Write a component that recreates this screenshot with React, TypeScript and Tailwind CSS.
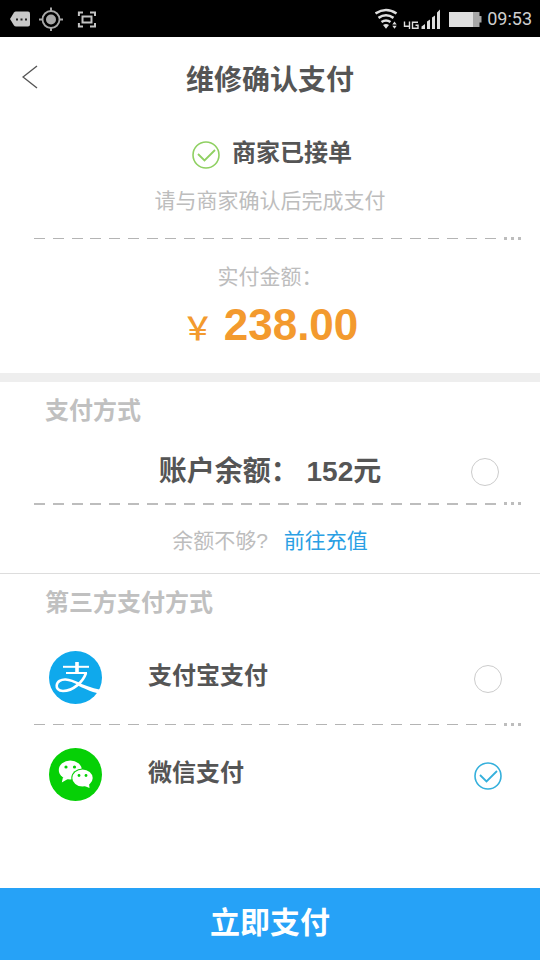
import { useState, type FormEvent, type ReactNode } from "react";

type Method = "balance" | "alipay" | "wechat";

const DASHES = Array.from({ length: 25 }, (_, i) => i);

function StatusBar() {
  return (
    <div className="flex h-[37px] items-center bg-black pr-2 pl-2.5 text-[#cfcfcf]">
      <svg className="h-6 w-24" viewBox="0 0 96 24" fill="none" aria-hidden="true">
        <path d="M0 12 4 5.500q.7-1 2-1h12q2 0 2 2v11q0 2-2 2H6q-1.300 0-2-1z" fill="#c8c8c8" />
        <path d="M6 11.500h2v2H6zM10.500 11.500h2v2h-2zM15 11.500h2v2h-2z" fill="#222" />
        <circle cx="41" cy="12.500" r="8.500" stroke="#a8a8a8" strokeWidth="1.800" />
        <circle cx="41" cy="12.500" r="5" fill="#a8a8a8" />
        <path d="M41 .5v4M41 20.500v4M29 12.500h4M49 12.500h4" stroke="#a8a8a8" strokeWidth="2" />
        <path d="M68.900 9V5.500H73M80 5.500h5V9M85 16v3.500h-5M73 19.500h-4.100V16" stroke="#c4c4c4" strokeWidth="2" />
        <rect x="72.500" y="9.500" width="9" height="6" stroke="#c4c4c4" strokeWidth="2" />
      </svg>
      <div className="ml-auto flex items-center">
        <svg className="h-6 w-[112px]" viewBox="0 0 112 24" fill="none" aria-hidden="true">
          <g stroke="#dedede" strokeWidth="2.600">
            <path d="M.5 6.500q10.500-7 21 0" />
            <path d="M3.500 10.800q7.500-5 15 0" />
            <path d="M6.500 15q4.500-3 9 0" />
          </g>
          <path d="M8 18q3-2 6 0l-3 3.800z" fill="#dedede" />
          <path d="m17.300 17.500 2.200-3 2.200 3zM17.300 18.800h4.400l-2.200 3z" fill="#dedede" />
          <path d="M29.500 14.500v4.700h5.500M34.500 14.500V22M43 15.200h-5.500v6H43v-3h-2.500" stroke="#dedede" strokeWidth="1.400" />
          <path d="M46.500 19.500 50 17v5h-3.500zM52 14.500l3-2V22h-3zM57 10.500l3-2V22h-3zM62 5.500l3-3V22h-3z" fill="#dedede" />
          <path d="M74 5h26v15H74z" fill="#dedede" />
          <path d="M98 5h6.500v4h2v6.500h-2V20H98z" fill="#a6a6a6" />
        </svg>
        <span className="font-['Roboto',sans-serif] text-[18px] leading-6">09:53</span>
      </div>
    </div>
  );
}

function CheckCircle({ className }: { className: string }) {
  return (
    <svg className={className} viewBox="0 0 28 28" fill="none" stroke="currentColor" aria-hidden="true">
      <circle cx="14" cy="14" r="13" strokeWidth="1.600" />
      <path d="m6 13 6.500 6.500L23 9" strokeWidth="1.800" />
    </svg>
  );
}

function DashedDivider({ thick = false }: { thick?: boolean }) {
  return (
    <div className="flex h-[3px] items-center gap-2 pr-[19px] pl-[34px]" role="separator">
      <div className="flex flex-1 justify-between">
        {DASHES.map((i) => (
          <span key={i} className={thick ? "h-[2px] w-[11px] bg-[#bdbdbd]" : "h-px w-[11px] bg-[#b4b4b4]"} />
        ))}
      </div>
      <div className="flex gap-1">
        <span className="size-[3px] bg-[#bdbdbd]" />
        <span className="size-[3px] bg-[#bdbdbd]" />
        <span className="size-[3px] bg-[#bdbdbd]" />
      </div>
    </div>
  );
}

type RadioProps = {
  id: Method;
  selected: Method;
  onSelect: (m: Method) => void;
};

function MethodRadio({ id, selected, onSelect }: RadioProps) {
  return (
    <span className="relative block size-7">
      <input
        id={id}
        type="radio"
        name="method"
        value={id}
        checked={selected === id}
        onChange={() => onSelect(id)}
        className="block size-7 cursor-pointer appearance-none rounded-full border border-[#cccccc] checked:border-transparent"
      />
      {selected === id && (
        <CheckCircle className="pointer-events-none absolute inset-0 size-7 text-[#35b0dc]" />
      )}
    </span>
  );
}

function MethodRow({ icon, label, ...radio }: RadioProps & { icon: ReactNode; label: string }) {
  return (
    <div className="flex items-center pr-[38px] pl-[49px]">
      {icon}
      <label htmlFor={radio.id} className="ml-[46px] flex-1 pb-1 text-[24px] leading-8 font-bold">
        {label}
      </label>
      <div className="pt-[3px]">
        <MethodRadio {...radio} />
      </div>
    </div>
  );
}

function AlipayLogo() {
  return (
    <svg className="size-[53px]" viewBox="0 0 53 53" fill="none" aria-hidden="true">
      <circle cx="26.500" cy="26.500" r="26.500" fill="#0fa9ec" />
      <g stroke="#fff">
        <path d="M28 11v11" strokeWidth="3.600" />
        <path d="M14 15.800h26" strokeWidth="2" />
        <path d="M17 22h21" strokeWidth="2" />
        <path
          d="M37 22C34 31 24 40 14 40c-5 0-6.500-3-6.300-5.500.3-4 4.500-6.300 9-6 5 .3 9.500 2.500 14 5"
          strokeWidth="2.600"
        />
      </g>
      <path d="M28 30.800c7 3.500 14 6 23.500 8L50 42.500C42 41 34 37 28 34z" fill="#fff" />
    </svg>
  );
}

function WechatLogo() {
  return (
    <svg className="size-[53px]" viewBox="0 0 53 53" aria-hidden="true">
      <circle cx="26.500" cy="26.500" r="26.500" fill="#06d006" />
      <path d="m14 29-1.200 5.500 6-3.500z" fill="#fff" />
      <ellipse cx="21.300" cy="22" rx="11.500" ry="9.500" fill="#fff" />
      <ellipse cx="33.500" cy="30" rx="11.200" ry="9.600" fill="#06d006" />
      <ellipse cx="33.500" cy="30" rx="10.200" ry="8.600" fill="#fff" />
      <path d="m40 35 .5 5-5-2z" fill="#fff" />
      <g fill="#06d006">
        <circle cx="17" cy="19" r="1.600" />
        <circle cx="25.500" cy="19" r="1.600" />
        <circle cx="30" cy="27.500" r="1.400" />
        <circle cx="37" cy="27.500" r="1.400" />
      </g>
    </svg>
  );
}

export default function App() {
  const [method, setMethod] = useState<Method>("wechat");

  const handleSubmit = (e: FormEvent) => {
    e.preventDefault();
  };

  return (
    <div className="flex min-h-screen flex-col bg-white font-['Liberation_Sans','Noto_Sans_CJK_SC',sans-serif] text-[#555555]">
      <StatusBar />

      <header className="grid grid-cols-[1fr_auto_1fr] items-center px-[22px] pt-6">
        <button type="button" aria-label="返回" className="w-4 pb-2">
          <svg className="h-6 w-4" viewBox="0 0 16 24" fill="none" stroke="#555" strokeWidth="1.400" aria-hidden="true">
            <path d="M15 1 1 12l14 11" />
          </svg>
        </button>
        <h1 className="text-[28px] leading-10 font-bold">维修确认支付</h1>
      </header>

      <form onSubmit={handleSubmit} className="flex flex-1 flex-col">
        <section className="text-center">
          <div className="flex items-center justify-center gap-3 pt-9 pl-1">
            <CheckCircle className="size-7 text-[#8fd062]" />
            <h2 className="pb-1 text-[24px] leading-8 font-bold">商家已接单</h2>
          </div>
          <p className="mt-3 mb-5 text-[21px] leading-8 text-[#bdbdbd]">请与商家确认后完成支付</p>
          <DashedDivider />
          <p className="mt-[21px] text-[21px] leading-8 text-[#bdbdbd]">实付金额：</p>
          <p className="mt-1 flex items-baseline justify-center gap-2.5 pb-5 text-[#f39a2e]">
            <span className="font-['Noto_Sans_CJK_SC',sans-serif] text-[32px] leading-10 font-medium">￥</span>
            <span className="text-[44px] leading-[56px] font-bold">238.00</span>
          </p>
        </section>

        <section className="border-t-[9px] border-[#eeeeee]">
          <h2 className="pt-[13px] pl-[45px] text-[24px] leading-8 font-bold text-[#c0c0c0]">支付方式</h2>
          <div className="mt-[25px] mb-2.5 grid grid-cols-[1fr_auto_1fr] items-center px-[41px]">
            <label htmlFor="balance" className="col-start-2 text-[28px] leading-10 font-bold">
              账户余额： 152元
            </label>
            <div className="justify-self-end">
              <MethodRadio id="balance" selected={method} onSelect={setMethod} />
            </div>
          </div>
          <DashedDivider thick />
          <p className="flex justify-center gap-4 pt-5 pb-4 text-[21px] leading-8 text-[#bdbdbd]">
            <span>余额不够?</span>
            <a href="#recharge" className="text-[#2a9fe4]">
              前往充值
            </a>
          </p>
        </section>

        <section className="border-t border-[#dddddd]">
          <h2 className="pt-[13px] pl-[45px] text-[24px] leading-8 font-bold text-[#c0c0c0]">第三方支付方式</h2>
          <div className="pt-8 pb-[19px]">
            <MethodRow id="alipay" label="支付宝支付" icon={<AlipayLogo />} selected={method} onSelect={setMethod} />
          </div>
          <DashedDivider />
          <div className="pt-[22px] pb-6">
            <MethodRow id="wechat" label="微信支付" icon={<WechatLogo />} selected={method} onSelect={setMethod} />
          </div>
        </section>

        <button type="submit" className="mt-auto h-[72px] bg-[#26a2f7] pb-1 text-[30px] font-bold text-white">
          立即支付
        </button>
      </form>
    </div>
  );
}
